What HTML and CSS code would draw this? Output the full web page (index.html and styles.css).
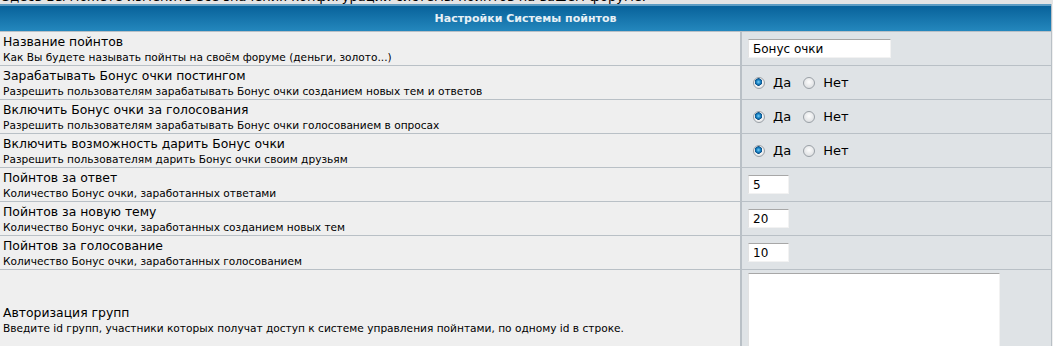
FILE: index.html
```html
<!DOCTYPE html>
<html lang="ru">

<head>
    <meta charset="UTF-8">
    <meta name="viewport" content="width=device-width, initial-scale=1.0">

    <title>Настройки Системы пойнтов</title>
    <link rel="stylesheet" href="styles.css">
</head>

<body>
    <p class="intro">Здесь Вы можете изменить все значения конфигурации системы пойнтов на вашем форуме.</p>

    <div class="tbl">
        <div class="thead">Настройки Системы пойнтов</div>

        <div class="row">
            <div class="lbl">
                <span class="name">Название пойнтов</span>
                <span class="desc">Как Вы будете называть пойнты на своём форуме (деньги, золото...)</span>
            </div>
            <div class="val">
                <input type="text" class="input wide" value="Бонус очки" />
            </div>
        </div>

        <div class="row">
            <div class="lbl">
                <span class="name">Зарабатывать Бонус очки постингом</span>
                <span class="desc">Разрешить пользователям зарабатывать Бонус очки созданием новых тем и ответов</span>
            </div>
            <div class="val">
                <label class="opt"><input type="radio" name="post" checked /> Да</label>
                <label class="opt"><input type="radio" name="post" /> Нет</label>
            </div>
        </div>

        <div class="row">
            <div class="lbl">
                <span class="name">Включить Бонус очки за голосования</span>
                <span class="desc">Разрешить пользователям зарабатывать Бонус очки голосованием в опросах</span>
            </div>
            <div class="val">
                <label class="opt"><input type="radio" name="poll" checked /> Да</label>
                <label class="opt"><input type="radio" name="poll" /> Нет</label>
            </div>
        </div>

        <div class="row">
            <div class="lbl">
                <span class="name">Включить возможность дарить Бонус очки</span>
                <span class="desc">Разрешить пользователям дарить Бонус очки своим друзьям</span>
            </div>
            <div class="val">
                <label class="opt"><input type="radio" name="gift" checked /> Да</label>
                <label class="opt"><input type="radio" name="gift" /> Нет</label>
            </div>
        </div>

        <div class="row">
            <div class="lbl">
                <span class="name">Пойнтов за ответ</span>
                <span class="desc">Количество Бонус очки, заработанных ответами</span>
            </div>
            <div class="val">
                <input type="text" class="input small" value="5" />
            </div>
        </div>

        <div class="row">
            <div class="lbl">
                <span class="name">Пойнтов за новую тему</span>
                <span class="desc">Количество Бонус очки, заработанных созданием новых тем</span>
            </div>
            <div class="val">
                <input type="text" class="input small" value="20" />
            </div>
        </div>

        <div class="row">
            <div class="lbl">
                <span class="name">Пойнтов за голосование</span>
                <span class="desc">Количество Бонус очки, заработанных голосованием</span>
            </div>
            <div class="val">
                <input type="text" class="input small" value="10" />
            </div>
        </div>

        <div class="row">
            <div class="lbl">
                <span class="name">Авторизация групп</span>
                <span class="desc">Введите id групп, участники которых получат доступ к системе управления пойнтами, по одному id в строке.</span>
            </div>
            <div class="val">
                <textarea class="input area"></textarea>
            </div>
        </div>
    </div>
</body>

</html>
```

FILE: styles.css
```css
body {
    margin: 0;
    background-color: #efefef;
    font-family: "DejaVu Sans", Verdana, sans-serif;
    color: #000;
    overflow: hidden;
}

.intro {
    margin: -10px 0 0 0;
    padding: 0 0 0 2px;
    font-size: 13px;
    line-height: 14px;
    background-color: #e4e4e4;
}

.tbl {
    width: 1051px;
    border-right: 1px solid #b9c0c6;
}

.thead {
    height: 25px;
    line-height: 25px;
    border-top: 2px solid #5c9cc3;
    background: linear-gradient(#08629a, #2487bd);
    color: #e6f0f6;
    font-size: 11px;
    font-weight: bold;
    text-align: center;
}

.row {
    display: grid;
    grid-template-columns: 742px 1fr;
    border-bottom: 1px solid #b9c0c6;
}

.thead + .row {
    border-top: 1px solid #b9c0c6;
}

.lbl {
    display: flex;
    flex-direction: column;
    justify-content: center;
    padding: 2px 3px 1px 3px;
    background-color: #efefef;
    border-right: 2px solid #b9c0c6;
}

.name {
    font-size: 12.4px;
    line-height: 16px;
}

.desc {
    font-size: 10.6px;
    line-height: 14px;
}

.val {
    display: flex;
    align-items: center;
    padding: 0 6px;
    background-color: #dfe3e6;
}

.input {
    box-sizing: border-box;
    height: 19px;
    margin: 0;
    padding: 1px 4px;
    border: 1px solid #f2f2f2;
    border-top-color: #a7a7a7;
    border-left-color: #e2e2e2;
    background-color: #fff;
    font-family: "DejaVu Sans", Verdana, sans-serif;
    font-size: 12px;
    outline: none;
}

.wide {
    width: 143px;
}

.small {
    width: 41px;
}

.area {
    display: block;
    width: 252px;
    height: 92px;
    margin: 3px 0;
    resize: none;
}

.opt {
    display: flex;
    align-items: center;
    font-size: 13px;
    margin-right: 7px;
}

.opt input {
    appearance: none;
    -webkit-appearance: none;
    box-sizing: border-box;
    width: 12px;
    height: 12px;
    margin: 0 8px 0 5px;
    border: 1px solid #9aa0a6;
    border-radius: 50%;
    background: radial-gradient(circle at 50% 40%, #fdfdfd, #d4d7da);
}

.opt input:checked {
    background: radial-gradient(circle at 45% 40%, #7fd0f5 0, #1a86c7 2px, #0b4f87 3.5px, #f4f4f4 4px, #d4d7da 100%);
}
```
